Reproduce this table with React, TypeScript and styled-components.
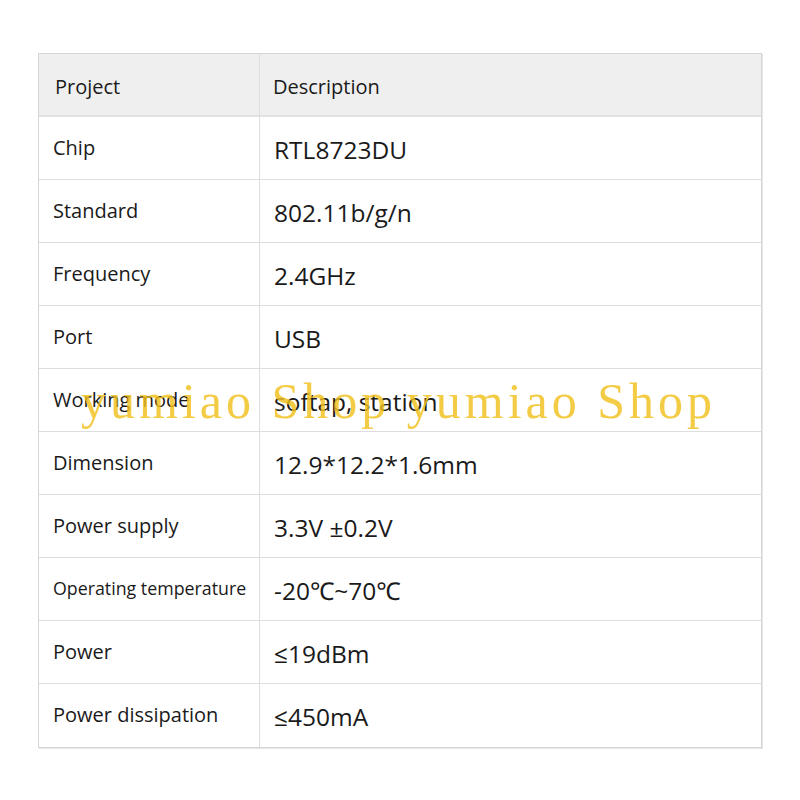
import React from 'react'
import styled, { createGlobalStyle } from 'styled-components'

const GlobalStyle = createGlobalStyle`
  body {
    margin: 0;
    background: #ffffff;
    font-family: 'Open Sans', 'Noto Sans', sans-serif;
  }
`

const rows: [string, string][] = [
  ['Chip', 'RTL8723DU'],
  ['Standard', '802.11b/g/n'],
  ['Frequency', '2.4GHz'],
  ['Port', 'USB'],
  ['Working mode', 'softap, station'],
  ['Dimension', '12.9*12.2*1.6mm'],
  ['Power supply', '3.3V ±0.2V'],
  ['Operating temperature', '-20℃~70℃'],
  ['Power', '≤19dBm'],
  ['Power dissipation', '≤450mA'],
]

export default function App() {
  return (
    <>
      <GlobalStyle />
      <Page>
        <SpecTable>
          <HeadCell>Project</HeadCell>
          <HeadCell $right>Description</HeadCell>
          {rows.map(([label, value]) => (
            <React.Fragment key={label}>
              <LabelCell $small={label.length > 18}>{label}</LabelCell>
              <ValueCell>{value}</ValueCell>
            </React.Fragment>
          ))}
          <Watermark>yumiao Shop yumiao Shop</Watermark>
        </SpecTable>
      </Page>
    </>
  )
}

const Page = styled.div`
  width: 800px;
  height: 800px;
  padding: 53px 0 0 38px;
  box-sizing: border-box;
`

const SpecTable = styled.div`
  position: relative;
  width: 722px;
  display: grid;
  grid-template-columns: 220px 1fr;
  grid-auto-rows: 63px;
  border: 1px solid #d6d6d6;
  box-shadow: 1px 1px 0 #e6e6e6;
  color: #1a1a1a;
`

const Cell = styled.div`
  display: flex;
  align-items: center;
  box-sizing: border-box;
  border-bottom: 1px solid #dedede;
  &:nth-last-child(-n + 3) {
    border-bottom: none;
  }
`

const HeadCell = styled(Cell)<{ $right?: boolean }>`
  background: #efefef;
  font-size: 20px;
  padding-left: ${(p) => (p.$right ? '13px' : '16px')};
  padding-top: 4px;
  border-left: ${(p) => (p.$right ? '1px solid #dedede' : 'none')};
  border-bottom: 2px solid #e2e2e2;
`

const LabelCell = styled(Cell)<{ $small?: boolean }>`
  font-size: ${(p) => (p.$small ? '17.8px' : '20px')};
  padding-left: 14px;
  padding-bottom: 2px;
`

const ValueCell = styled(Cell)`
  font-size: 24.5px;
  padding-left: 14px;
  padding-top: 2px;
  border-left: 1px solid #dedede;
`

const Watermark = styled.div`
  position: absolute;
  left: 42px;
  top: 322px;
  font-family: 'Liberation Serif', 'Times New Roman', serif;
  font-size: 50px;
  line-height: 1;
  letter-spacing: 4px;
  white-space: nowrap;
  color: rgba(240, 192, 28, 0.82);
  pointer-events: none;
`
